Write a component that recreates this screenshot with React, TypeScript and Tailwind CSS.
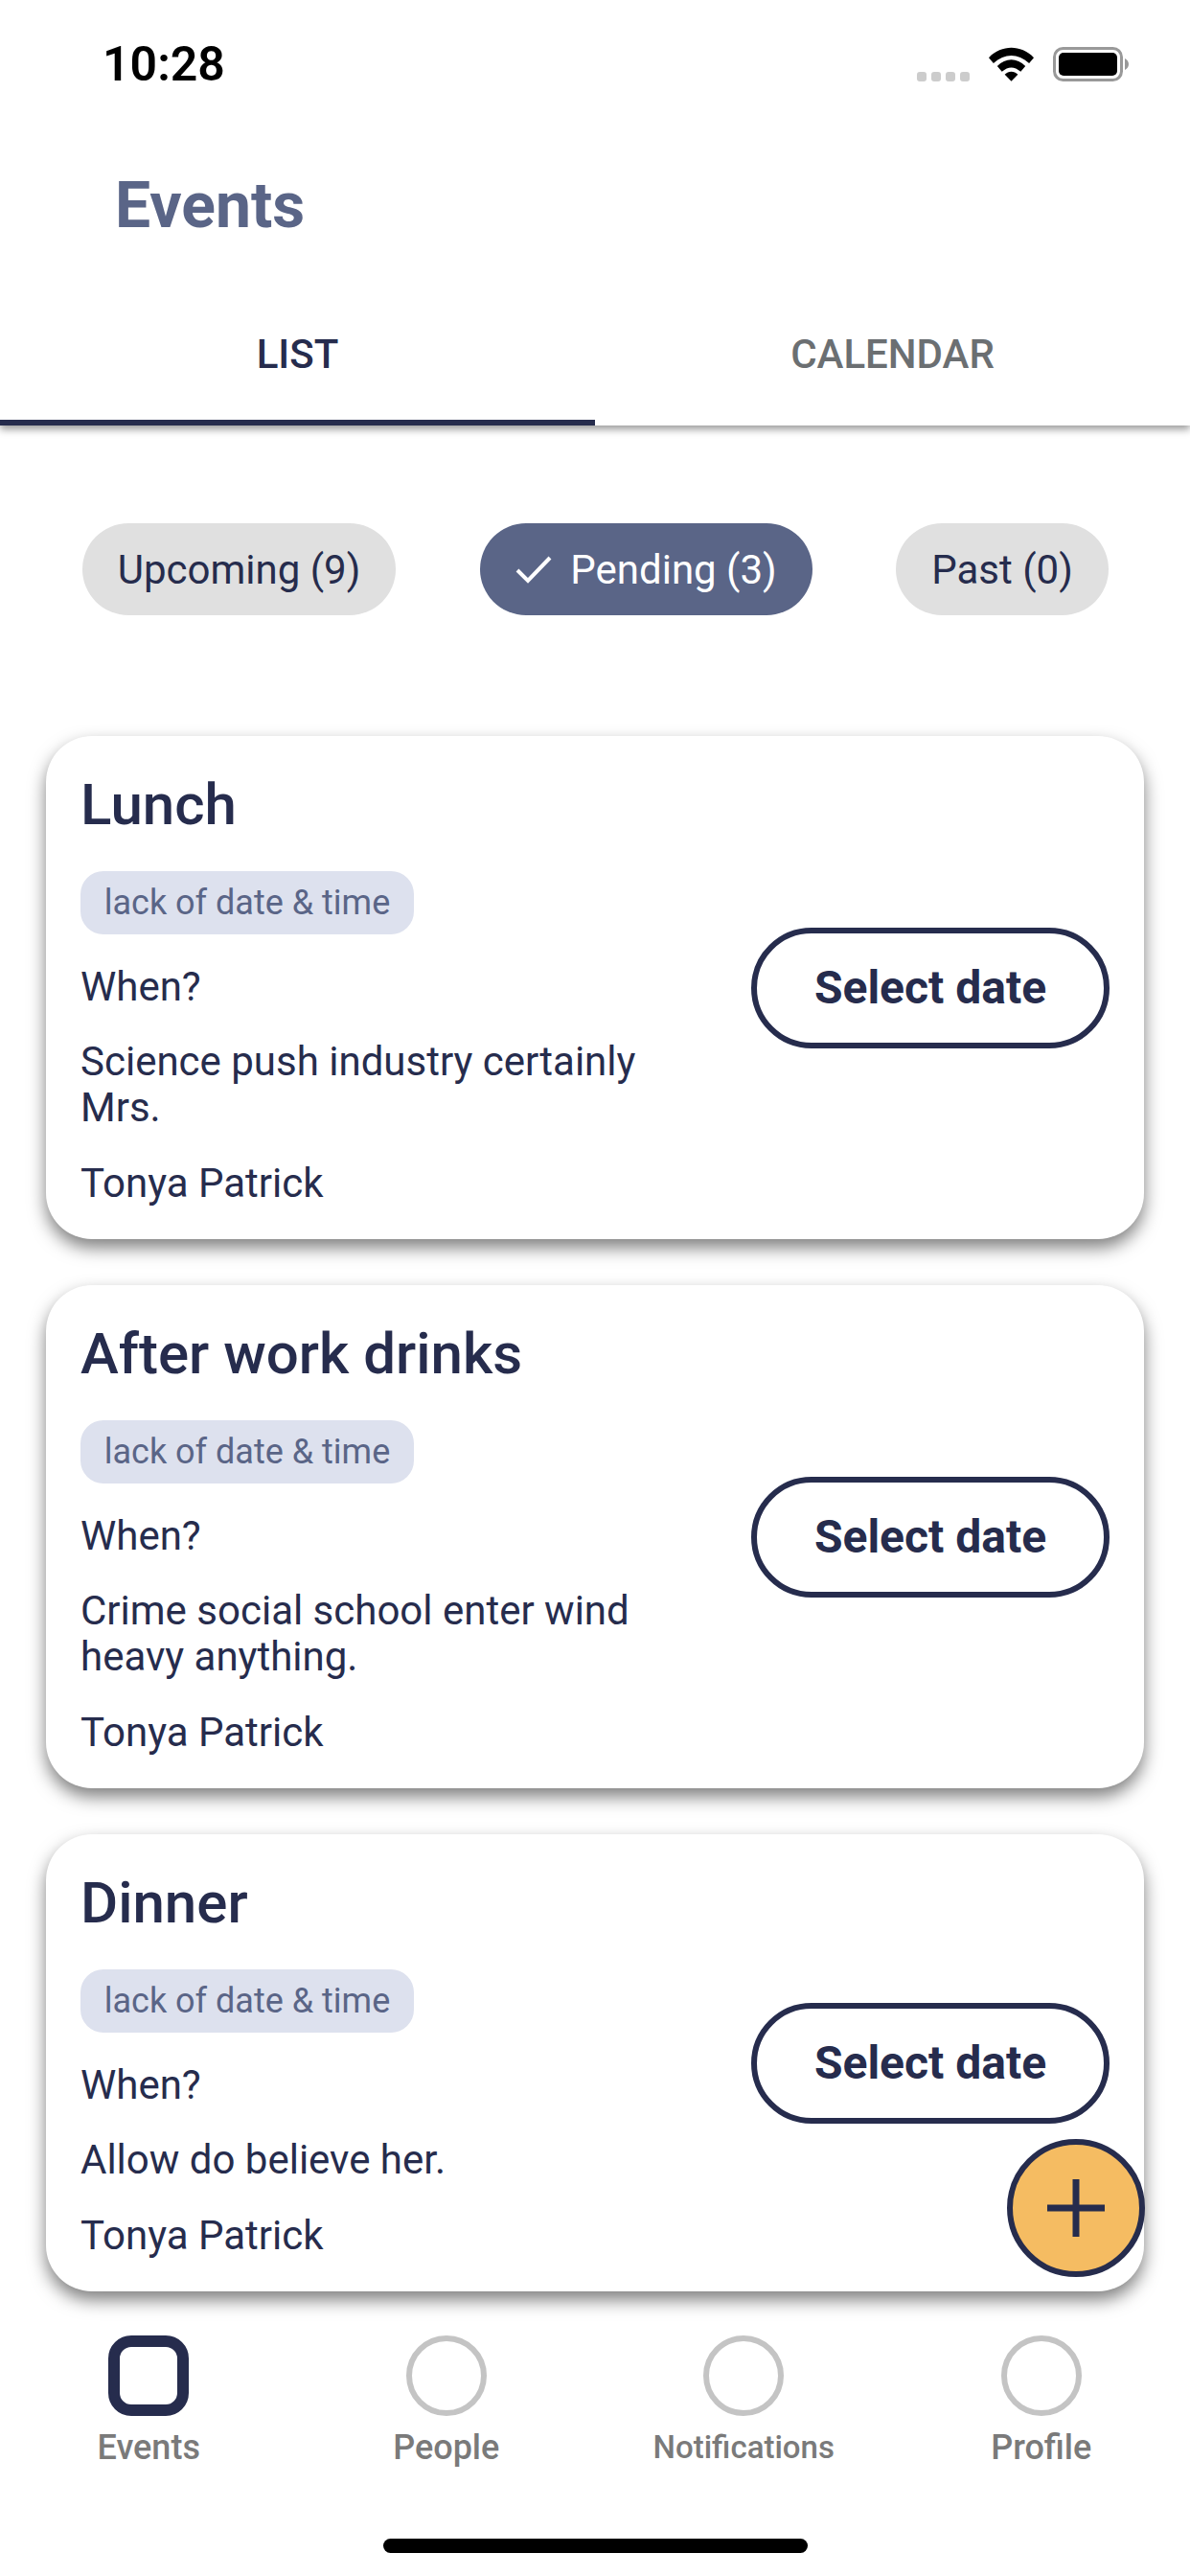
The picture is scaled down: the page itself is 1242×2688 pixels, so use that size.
const events = [
  { title: "Lunch", note: "Science push industry certainly Mrs." },
  { title: "After work drinks", note: "Crime social school enter wind heavy anything." },
  { title: "Dinner", note: "Allow do believe her." },
];

const chips = [
  { label: "Upcoming (9)", className: "w-[327px] bg-[#e0e0e0] text-[#262c4d]" },
  { label: "Pending (3)", className: "w-[347px] bg-[#5a6587] text-white", checked: true },
  { label: "Past (0)", className: "w-[222px] bg-[#e0e0e0] text-[#262c4d]" },
];

const tabs = [
  { label: "Events", active: true },
  { label: "People" },
  { label: "Notifications", small: true },
  { label: "Profile" },
];

function StatusIcons() {
  return (
    <div className="flex items-center">
      <div className="mt-[26px] mr-[20px] flex gap-[5px]">
        {[0, 1, 2, 3].map((i) => (
          <div key={i} className="h-[10px] w-[10px] rounded-[3px] bg-[#cccccc]" />
        ))}
      </div>
      <svg width="47" height="36" viewBox="0 0 48 36" className="mr-[20px]">
        <path d="M0 11 C14 -3 34 -3 48 11 L43 17 C31 6 17 6 5 17 Z" fill="#000" />
        <path d="M9 20 C18 11 30 11 39 20 L34 26 C27 20 21 20 14 26 Z" fill="#000" />
        <path d="M17 29 C21 25 27 25 31 29 L24 36 Z" fill="#000" />
      </svg>
      <svg width="79" height="36" viewBox="0 0 79 36">
        <rect x="1.5" y="1.5" width="70" height="33" rx="9" fill="none" stroke="#999999" strokeWidth="3" />
        <rect x="6" y="6" width="61" height="24" rx="5" fill="#000" />
        <path d="M75 12 C77 13 79 15 79 18 C79 21 77 23 75 24 Z" fill="#999999" />
      </svg>
    </div>
  );
}

function EventCard({ title, note }: { title: string; note: string }) {
  return (
    <div className="flex items-center justify-between rounded-[48px] bg-white pt-[34px] pr-[36px] pb-[34px] pl-[36px] shadow-[0_9px_18px_rgba(0,0,0,0.5)]">
      <div className="w-[600px]">
        <div className="text-[60px] leading-[75px] font-medium text-[#262c4d]">{title}</div>
        <div className="mt-[32px] flex h-[66px] w-[348px] items-center justify-center rounded-[24px] bg-[#dde1ee] text-[36px] text-[#5a6587]">
          lack of date &amp; time
        </div>
        <div className="mt-[31px] text-[42px] leading-[48px] text-[#262c4d]">When?</div>
        <div className="mt-[30px] text-[42px] leading-[48px] text-[#262c4d]">{note}</div>
        <div className="mt-[31px] text-[42px] leading-[48px] text-[#262c4d]">Tonya Patrick</div>
      </div>
      <div className="flex h-[126px] w-[374px] items-center justify-center rounded-full border-[6px] border-[#262c4d] text-[48px] font-bold text-[#262c4d]">
        Select date
      </div>
    </div>
  );
}

export default function App() {
  return (
    <div className="relative flex h-[2688px] w-[1242px] flex-col overflow-hidden bg-white font-['Roboto',sans-serif]">
      <div className="flex h-[134px] items-center justify-between pr-[64px] pl-[107px]">
        <div className="text-[50px] font-semibold text-black">10:28</div>
        <StatusIcons />
      </div>

      <div className="flex h-[164px] items-center pb-[3px] pl-[120px] text-[66px] font-bold text-[#5a6587]">Events</div>

      <div className="flex h-[146px] [clip-path:inset(0_0_-20px_0)] shadow-[0_4px_8px_rgba(0,0,0,0.4)]">
        <div className="flex flex-1 items-center justify-center border-b-[6px] border-[#262c4d] pt-[2px] text-[42px] font-medium text-[#262c4d]">
          LIST
        </div>
        <div className="flex flex-1 items-center justify-center pt-[2px] pb-[6px] text-[42px] font-medium text-[#6b6f72]">
          CALENDAR
        </div>
      </div>

      <div className="mt-[102px] flex justify-between pr-[85px] pl-[86px]">
        {chips.map((chip) => (
          <div key={chip.label} className={`flex h-[96px] items-center justify-center rounded-full text-[42px] ${chip.className}`}>
            {chip.checked && (
              <svg width="40" height="30" viewBox="0 0 40 30" className="mr-[18px]">
                <path d="M3 16 L14 27 L37 3" fill="none" stroke="#fff" strokeWidth="4" />
              </svg>
            )}
            {chip.label}
          </div>
        ))}
      </div>

      <div className="mt-[126px] flex flex-col gap-[48px] pr-[48px] pl-[48px]">
        {events.map((event) => (
          <EventCard key={event.title} title={event.title} note={event.note} />
        ))}
      </div>

      <div className="absolute top-[2232px] left-[1051px] flex h-[144px] w-[144px] items-center justify-center rounded-full border-[6px] border-[#262c4d] bg-[#f5bc62]">
        <svg width="60" height="60" viewBox="0 0 60 60">
          <path d="M30 0 V60 M0 30 H60" stroke="#262c4d" strokeWidth="7" />
        </svg>
      </div>

      <div className="mt-[46px] flex">
        {tabs.map((tab) => (
          <div key={tab.label} className="flex flex-1 flex-col items-center">
            {tab.active ? (
              <div className="h-[84px] w-[84px] rounded-[24px] border-[12px] border-[#262c4d]" />
            ) : (
              <div className="h-[84px] w-[84px] rounded-full border-[6px] border-[#c4c4c4]" />
            )}
            <div className={`mt-[12px] leading-[42px] font-medium text-[#7a7a7a] ${tab.small ? "text-[33px]" : "text-[36px]"}`}>
              {tab.label}
            </div>
          </div>
        ))}
      </div>

      <div className="absolute top-[2649px] left-[400px] h-[15px] w-[443px] rounded-full bg-black" />
    </div>
  );
}
